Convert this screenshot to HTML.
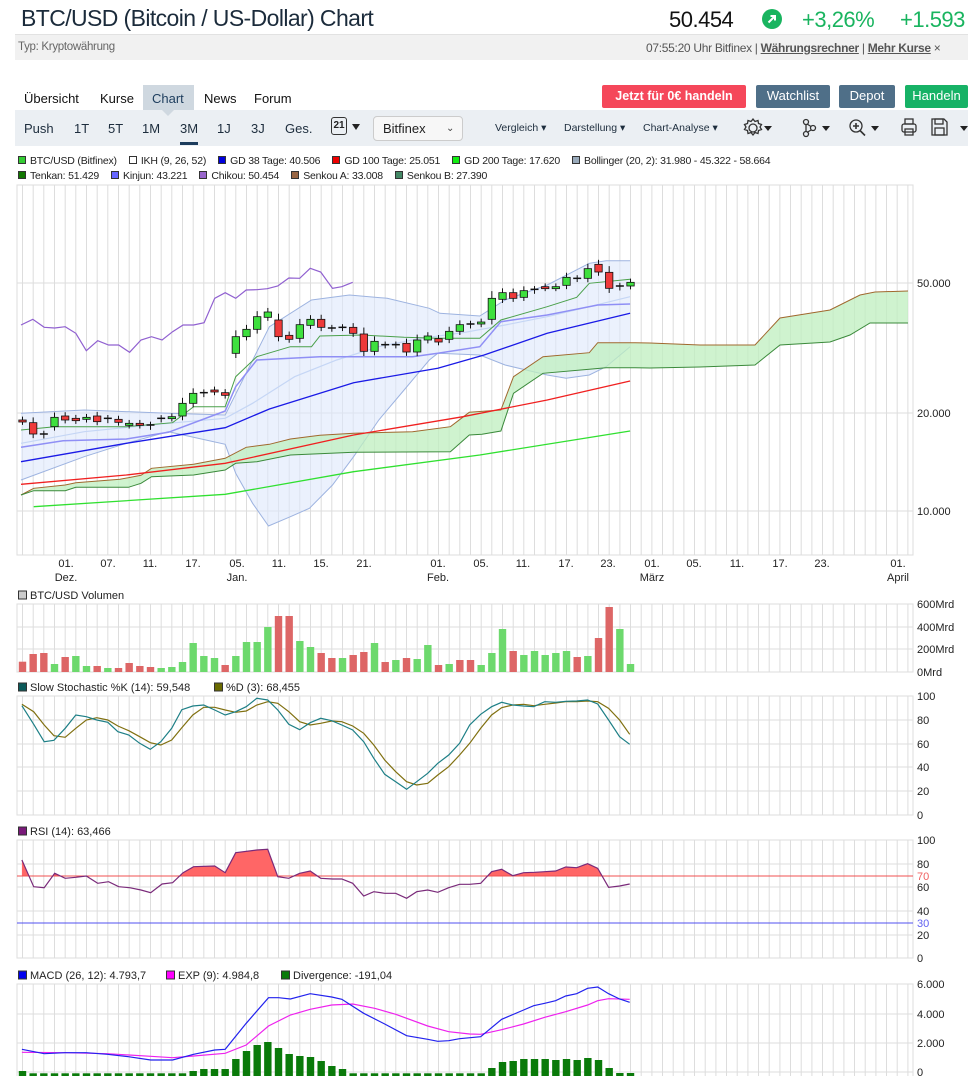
<!DOCTYPE html>
<html><head><meta charset="utf-8">
<style>
*{margin:0;padding:0;box-sizing:border-box}
body{width:968px;height:1076px;overflow:hidden;background:#fff;font-family:"Liberation Sans",sans-serif;position:relative;color:#222}
.a{position:absolute;white-space:nowrap}
.btn{position:absolute;color:#fff;font-size:13px;text-align:center;line-height:22px;border-radius:2px;height:23px;top:85px}
.tb{position:absolute;top:121px;font-size:13px;color:#1d2d3d}
.sm{position:absolute;top:122px;font-size:10.5px;color:#1d2d3d}
</style></head><body>
<div class="a" style="left:21px;top:5px;font-size:23px;color:#1b2b3b;letter-spacing:-0.6px">BTC/USD (Bitcoin / US-Dollar) Chart</div>
<div class="a" style="left:669px;top:7px;font-size:22px;color:#111;letter-spacing:-0.5px">50.454</div>
<div class="a" style="left:762px;top:9px;width:20px;height:20px;border-radius:50%;background:#19b45f"><svg width="20" height="20"><path d="M6.5 13.5L13 7M8.5 7H13V11.5" stroke="#fff" stroke-width="2" fill="none"/></svg></div>
<div class="a" style="left:802px;top:7px;font-size:22px;color:#19b45f;letter-spacing:-0.5px">+3,26%</div>
<div class="a" style="left:900px;top:7px;font-size:22px;color:#19b45f;letter-spacing:-0.5px">+1.593</div>
<div class="a" style="left:15px;top:34px;width:953px;height:26px;background:#f1f1f1;border-top:1px solid #e2e2e2"></div>
<div class="a" style="left:18px;top:41px;font-size:11.5px;color:#666;letter-spacing:-0.3px">Typ: Kryptowährung</div>
<div class="a" style="left:646px;top:41px;font-size:12px;color:#555;letter-spacing:-0.3px">07:55:20 Uhr Bitfinex | <u style="font-weight:bold">Währungsrechner</u> | <u style="font-weight:bold">Mehr Kurse</u> ×</div>

<div class="a" style="left:143px;top:85px;width:51px;height:25px;background:#cfd8e0"></div>
<div class="a" style="left:24px;top:91px;font-size:13px;color:#111">Übersicht</div>
<div class="a" style="left:100px;top:91px;font-size:13px;color:#111">Kurse</div>
<div class="a" style="left:152px;top:91px;font-size:13px;color:#1d3d5d">Chart</div>
<div class="a" style="left:204px;top:91px;font-size:13px;color:#111">News</div>
<div class="a" style="left:254px;top:91px;font-size:13px;color:#111">Forum</div>
<div class="btn" style="left:602px;width:144px;background:#f5475a;font-weight:bold;font-size:12.5px">Jetzt für 0€ handeln</div>
<div class="btn" style="left:756px;width:74px;background:#4f6f88">Watchlist</div>
<div class="btn" style="left:839px;width:56px;background:#4f6f88">Depot</div>
<div class="btn" style="left:905px;width:63px;background:#17b266">Handeln</div>

<div class="a" style="left:15px;top:110px;width:953px;height:36px;background:#ebeff3"></div>
<div class="a" style="left:162px;top:110px;width:0;height:0;border-left:6px solid transparent;border-right:6px solid transparent;border-top:6px solid #cfd8e0"></div>
<div class="tb" style="left:24px">Push</div><div class="tb" style="left:74px">1T</div><div class="tb" style="left:108px">5T</div><div class="tb" style="left:142px">1M</div><div class="tb" style="left:180px">3M</div><div class="tb" style="left:217px">1J</div><div class="tb" style="left:251px">3J</div><div class="tb" style="left:285px">Ges.</div>
<div class="a" style="left:180px;top:142px;width:18px;height:3px;background:#1d3d5d"></div>
<div class="a" style="left:331px;top:117px;width:16px;height:18px;border:1.5px solid #333;border-radius:3px;font-size:10px;font-weight:bold;text-align:center;line-height:16px">21</div>
<div class="a" style="left:352px;top:124px;border-left:4px solid transparent;border-right:4px solid transparent;border-top:6px solid #222"></div>
<div class="a" style="left:373px;top:116px;width:90px;height:25px;background:#f7f7f7;border:1px solid #ccc;border-radius:4px;font-size:13px;line-height:23px;padding-left:9px">Bitfinex<span style="position:absolute;left:72px;font-size:10px;color:#444">⌄</span></div>
<div class="sm" style="left:495px">Vergleich ▾</div>
<div class="sm" style="left:564px">Darstellung ▾</div>
<div class="sm" style="left:643px">Chart-Analyse ▾</div>
<svg class="a" style="left:740px;top:112px" width="228" height="32">
<g fill="none" stroke="#333" stroke-width="1.3">
<circle cx="13" cy="16" r="4"/><path d="M13 7l2 2.5 3-1 .5 3 3 1-1.5 2.5 1.5 2.5-3 1-.5 3-3-1-2 2.5-2-2.5-3 1-.5-3-3-1 1.5-2.5L4.5 12.5l3-1 .5-3 3 1z"/>
<circle cx="66" cy="10" r="2.5"/><circle cx="73" cy="16" r="2.5"/><circle cx="66" cy="22" r="2.5"/><path d="M67 12l4 2.5M71 18l-4 2.5M66 12.5v7"/>
<circle cx="116" cy="14" r="6"/><path d="M120 18.5l5 5M116 11v6M113 14h6" stroke-width="1.6"/>
<rect x="162" y="12" width="14" height="8" rx="2"/><rect x="165" y="7" width="8" height="5"/><rect x="165" y="17" width="8" height="6"/>
<path d="M192 7h12l3 3v13h-15z"/><rect x="195" y="7" width="8" height="5"/><rect x="195" y="16" width="9" height="7"/>
</g>
<g fill="#222"><path d="M24 14h8l-4 5z"/><path d="M82 14h8l-4 5z"/><path d="M131 14h8l-4 5z"/><path d="M220 14h8l-4 5z"/></g>
</svg>

<div class="a" style="left:18px;top:154px;font-size:10.5px;line-height:15px;color:#222;letter-spacing:-0.2px" id="lg"></div>
<svg id="ch" class="a" style="left:0;top:0" width="968" height="1076"></svg>
<script>
var L=document.getElementById('lg');
function it(c,t,b){return '<span style="display:inline-block;width:8px;height:8px;background:'+c+';border:1px solid '+(b||'#333')+';margin-right:4px"></span>'+t}
L.innerHTML='<span style="margin-right:12px">'+it('#3c3','BTC/USD (Bitfinex)')+'</span><span style="margin-right:12px">'+it('#fff','IKH (9, 26, 52)')+'</span><span style="margin-right:12px">'+it('#00d','GD 38 Tage: 40.506')+'</span><span style="margin-right:12px">'+it('#e00','GD 100 Tage: 25.051')+'</span><span style="margin-right:12px">'+it('#1e1','GD 200 Tage: 17.620')+'</span><span>'+it('#9ab','Bollinger (20, 2): 31.980 - 45.322 - 58.664')+'</span><br><span style="margin-right:12px">'+it('#170','Tenkan: 51.429')+'</span><span style="margin-right:12px">'+it('#66f','Kinjun: 43.221')+'</span><span style="margin-right:12px">'+it('#96c','Chikou: 50.454')+'</span><span style="margin-right:12px">'+it('#964','Senkou A: 33.008')+'</span><span>'+it('#486','Senkou B: 27.390')+'</span>';
var s='',K=660/1568;
function P(a,oy,ry){var r=[];for(var i=0;i<a.length;i+=2){r.push((a[i]*K).toFixed(1)+','+(ry?a[i+1]:(a[i+1]/3+oy)).toFixed(1))}return r.join(' ')}
function pl(pts,c,w,f){s+='<polyline points="'+pts+'" fill="'+(f||'none')+'" stroke="'+c+'" stroke-width="'+(w||1)+'"/>'}
function T(x,y,t,c,a){s+='<text x="'+x+'" y="'+y+'" font-size="11" fill="'+(c||'#222')+'" font-family="Liberation Sans,sans-serif"'+(a?' text-anchor="middle"':'')+'>'+t+'</text>'}
function panel(top,bot,hs){s+='<rect x="17" y="'+top+'" width="896" height="'+(bot-top)+'" fill="#fff" stroke="#ddd"/>';
 for(var x=22.5;x<912;x+=10.667)s+='<line x1="'+x.toFixed(1)+'" y1="'+top+'" x2="'+x.toFixed(1)+'" y2="'+bot+'" stroke="#ddd"/>';
 hs.forEach(function(h){s+='<line x1="17" y1="'+h[0]+'" x2="913" y2="'+h[0]+'" stroke="#ddd"/>';T(917,h[0]+4,h[1])})}
// main
panel(185,555,[[283,'50.000'],[413,'20.000'],[511,'10.000']]);
var bu=[50,490,200,480,400,490,535,495,640,230,740,150,830,135,920,145,1020,175,1045,190,1140,198,1200,150,1300,105,1400,40,1440,32,1497,32];
var bl=[50,690,200,620,300,580,400,545,535,583,560,670,600,760,638,828,690,800,735,775,790,705,840,620,900,510,960,420,1020,330,1040,310,1140,315,1200,345,1300,375,1345,385,1400,375,1440,350,1497,290];
var blr=[];for(var i=bl.length-2;i>=0;i-=2){blr.push(bl[i],bl[i+1])}
s+='<polygon points="'+P(bu.concat(blr),250)+'" fill="#dde8fb" fill-opacity="0.6" stroke="none"/>';
pl(P(bu,250),'#9db3e0');pl(P(bl,250),'#9db3e0');
pl(P([50,580,200,545,400,520,535,505,600,460,700,380,800,330,900,290,1000,265,1100,248,1200,225,1300,200,1400,170,1497,140],250),'#c5d6f5',1.2);
// cloud
var A=[50,735,80,715,155,705,180,698,285,688,335,676,360,655,460,643,535,625,585,592,640,583,690,567,760,556,840,550,980,545,1070,530,1115,487,1190,480,1220,380,1290,320,1400,308,1420,278,1497,278];
var B=[50,735,80,722,155,722,180,712,305,712,335,700,360,680,460,675,535,660,560,640,610,635,690,615,840,607,1070,605,1115,555,1145,553,1190,543,1220,430,1290,370,1400,358,1440,353,1497,353];
var Ae=' 650,343 700,345 755,345 780,318 830,310 860,295 875,292 908,291';
var Be=' 650,368 700,367 755,365 780,345 830,342 850,335 870,323 908,323';
var ap=P(A,250)+Ae, bp=P(B,250)+Be;
var bpr=bp.trim().split(' ').reverse().join(' ');
s+='<polygon points="'+ap+' '+bpr+'" fill="#bfefbf" fill-opacity="0.75"/>';
pl(ap,'#a0682e');pl(bp,'#3b8a3b');
pl(P([50,592,150,572,300,567,400,547,535,483,560,410,610,330,760,320,980,320,1040,310,1140,290,1190,215,1300,195,1340,185,1420,165,1497,162],250),'#8f8ff5',1.5);
pl(P([50,540,130,530,300,530,410,518,460,470,535,470,560,380,610,320,690,290,740,290,760,258,860,255,960,262,1040,265,1140,265,1190,210,1300,170,1370,142,1400,100,1497,88],250),'#4aa04a');
pl(P([50,635,300,580,535,533,640,477,840,398,1040,355,1150,315,1300,250,1497,190],250),'#1a1ae6',1.3);
pl(P([50,703,300,675,535,640,840,555,1100,500,1300,450,1497,393],250),'#f02020',1.3);
pl(P([80,770,535,733,840,665,1140,615,1497,543],250),'#30e030',1.3);
pl(P([50,225,78,208,105,232,130,234,155,230,180,250,205,302,232,272,258,285,282,285,308,307,335,270,360,260,385,270,410,245,435,225,460,225,485,218,510,145,535,128,560,145,585,120,610,119,635,116,660,108,686,84,712,85,737,55,762,66,790,115,812,110,838,97],250),'#9060d0',1.2);
var cd=[[510,515,'r'],[518,552,'r'],[552,556,'k'],[502,530,'g'],[498,510,'r'],[505,512,'r'],[502,508,'g'],[498,515,'r'],[505,510,'k'],[508,517,'r'],[520,526,'g'],[520,526,'r'],[525,530,'k'],[505,508,'k'],[500,505,'g'],[460,498,'g'],[430,460,'g'],[428,432,'k'],[420,426,'r'],[428,436,'r'],[260,310,'g'],[238,260,'g'],[200,238,'g'],[186,202,'g'],[210,260,'r'],[256,268,'r'],[224,265,'g'],[208,226,'g'],[208,232,'r'],[234,236,'k'],[232,234,'k'],[232,250,'r'],[252,304,'r'],[274,304,'g'],[284,286,'k'],[284,286,'k'],[280,306,'r'],[270,306,'g'],[258,270,'g'],[266,276,'r'],[244,268,'g'],[224,244,'g'],[222,226,'k'],[216,222,'g'],[145,208,'g'],[128,148,'g'],[128,145,'r'],[122,142,'g'],[118,122,'k'],[110,114,'r'],[110,114,'g'],[82,106,'g'],[85,87,'k'],[56,85,'g'],[43,66,'r'],[67,115,'r'],[108,112,'k'],[97,108,'g']];
cd.forEach(function(c,i){var x=22.5+i*10.667,t=c[0]/3+250,b=c[1]/3+250,h=b-t;
 s+='<line x1="'+x+'" y1="'+(t-3-h*0.2)+'" x2="'+x+'" y2="'+(b+3+h*0.1)+'" stroke="#111"/>';
 if(c[2]=='k')s+='<line x1="'+(x-4)+'" y1="'+t+'" x2="'+(x+4)+'" y2="'+t+'" stroke="#111" stroke-width="1.5"/>';
 else s+='<rect x="'+(x-3.7)+'" y="'+t+'" width="7.4" height="'+Math.max(h,2)+'" fill="'+(c[2]=='g'?'#3ee03e':'#ee3a3a')+'" stroke="#111" stroke-width="0.8"/>'});
[[66,'01.'],[108,'07.'],[150,'11.'],[193,'17.'],[237,'05.'],[279,'11.'],[321,'15.'],[364,'21.'],[438,'01.'],[481,'05.'],[523,'11.'],[566,'17.'],[608,'23.'],[652,'01.'],[694,'05.'],[737,'11.'],[780,'17.'],[822,'23.'],[898,'01.']].forEach(function(d){T(d[0],567,d[1],'#222',1)});
[[66,'Dez.'],[237,'Jan.'],[438,'Feb.'],[652,'März'],[898,'April']].forEach(function(d){T(d[0],581,d[1],'#222',1)});
// volume
function lab(y,c,t){s+='<rect x="18.5" y="'+(y-8)+'" width="8" height="8" fill="'+c+'" stroke="#333"/>';T(30,y,t)}
lab(599,'#ccc','BTC/USD Volumen');
panel(604,672,[[604,'600Mrd'],[627,'400Mrd'],[649,'200Mrd'],[672,'0Mrd']]);
var vb=[230,'r',207,'r',204,'r',237,'g',216,'r',213,'g',243,'g',243,'r',249,'g',249,'r',234,'r',243,'r',246,'r',249,'g',246,'g',231,'g',174,'g',213,'g',219,'g',240,'r',213,'g',171,'g',171,'g',126,'g',93,'r',93,'r',168,'g',186,'g',204,'r',219,'r',219,'g',210,'r',201,'r',174,'g',231,'r',225,'g',219,'r',222,'g',180,'g',240,'r',237,'g',225,'r',225,'r',240,'g',204,'g',132,'g',198,'r',210,'g',198,'g',210,'g',204,'g',198,'g',216,'r',213,'g',159,'r',66,'r',132,'g',237,'g'];
for(var i=0;i<vb.length;i+=2){var x=22.5+(i/2)*10.667,t=vb[i]/3+585;s+='<rect x="'+(x-3.7)+'" y="'+t.toFixed(1)+'" width="7.4" height="'+(672-t).toFixed(1)+'" fill="'+(vb[i+1]=='g'?'#6dd96d':'#dd6666')+'"/>'}
// stochastic
lab(691,'#0b5a5a','Slow Stochastic %K (14): 59,548');
s+='<rect x="214.5" y="683" width="8" height="8" fill="#6b6b00" stroke="#333"/>';T(226,691,'%D (3): 68,455');
panel(696,815,[[696,'100'],[720,'80'],[744,'60'],[767,'40'],[791,'20'],[815,'0']]);
var kx=[52,80,105,128,155,180,205,230,256,280,306,332,357,382,408,432,458,484,510,535,560,585,610,636,660,686,712,737,762,788,812,838,864,888,914,940,966,990,1016,1040,1066,1092,1116,1142,1168,1192,1218,1244,1268,1294,1320,1344,1370,1396,1420,1446,1472,1496];
var ky=[362,418,470,466,430,390,395,405,412,440,450,475,493,470,430,374,363,360,375,390,380,365,340,345,375,418,434,413,400,407,420,435,470,520,568,590,613,590,565,535,510,475,420,388,365,352,360,363,365,350,352,349,348,345,357,405,455,478];
var dy=[358,380,420,452,457,430,405,398,405,423,437,455,473,480,465,428,390,367,367,375,382,378,360,350,355,380,410,420,415,408,410,423,445,480,525,560,590,600,595,570,545,510,475,430,390,368,360,358,362,358,354,350,350,348,350,370,405,448];
function zip(a,b){var r=[];a.forEach(function(v,i){r.push(v,b[i])});return r}
pl(P(zip(kx,dy),585),'#807010',1.2);pl(P(zip(kx,ky),585),'#1d7f86',1.2);
// RSI
lab(835,'#7a1a7a','RSI (14): 63,466');
panel(840,958,[[840,'100'],[864,'80'],[887,'60'],[911,'40'],[935,'20'],[958,'0']]);
var rx=[52,80,105,130,155,180,205,232,258,282,308,335,358,385,410,435,460,510,535,560,610,636,660,686,712,737,762,790,812,838,864,888,914,940,966,990,1016,1040,1066,1092,1116,1142,1168,1192,1218,1244,1270,1294,1320,1344,1370,1396,1420,1446,1472,1496];
var ry=[105,185,188,145,160,157,153,175,170,185,188,195,203,177,173,143,125,123,143,83,75,73,155,160,145,138,160,162,162,175,213,200,205,205,220,200,195,202,188,178,178,175,140,133,152,143,142,140,138,126,128,116,130,187,183,177];
var rp=P(zip(rx,ry),825);
s+='<clipPath id="rc"><rect x="17" y="830" width="900" height="46"/></clipPath><polygon clip-path="url(#rc)" points="21.9,876 '+rp+' 629.7,876" fill="#ff6666"/>';
s+='<line x1="17" y1="876" x2="913" y2="876" stroke="#f05050"/><line x1="17" y1="923" x2="913" y2="923" stroke="#5050f0"/>';
T(917,880,'70','#f06060');T(917,927,'30','#6060f0');
pl(rp,'#7a2a7a',1.2);
// MACD
lab(979,'#0000ee','MACD (26, 12): 4.793,7');
s+='<rect x="166.5" y="971" width="8" height="8" fill="#f0f" stroke="#333"/>';T(178,979,'EXP (9): 4.984,8');
s+='<rect x="281.5" y="971" width="8" height="8" fill="#0a7a0a" stroke="#333"/>';T(293,979,'Divergence: -191,04');
panel(984,1080,[[984,'6.000'],[1014,'4.000'],[1043,'2.000'],[1072,'0']]);
var dv=[738,745,745,745,745,745,745,745,745,745,745,745,745,745,745,745,738,732,732,732,702,678,660,651,669,687,693,696,708,723,732,745,745,745,745,745,745,745,745,745,745,745,745,745,729,711,708,702,702,702,705,702,705,699,705,729,744,744];
dv.forEach(function(v,i){var x=22.5+i*10.667,t=v/3+825;s+='<rect x="'+(x-3.7)+'" y="'+t.toFixed(1)+'" width="7.4" height="'+(1080-t).toFixed(1)+'" fill="#0a7a0a"/>'});
pl(P([52,682,155,683,255,686,358,694,410,698,460,693,535,685,585,660,638,603,690,570,737,553,788,540,838,537,890,550,940,568,1016,603,1066,620,1116,627,1142,628,1192,614,1244,597,1294,577,1344,560,1396,540,1420,527,1446,521,1496,523],825),'#ee22ee',1.2);
pl(P([52,673,105,686,155,683,205,683,255,688,305,695,358,705,410,705,460,688,510,675,535,673,585,595,638,518,662,518,690,522,737,506,788,516,812,523,864,565,914,597,966,632,1016,643,1040,649,1066,647,1092,641,1142,635,1192,583,1244,555,1268,542,1294,535,1320,527,1344,513,1370,506,1396,490,1420,486,1446,506,1472,522,1496,532],825),'#2222ee',1.2);
document.getElementById('ch').innerHTML=s;
</script>
</body></html>
